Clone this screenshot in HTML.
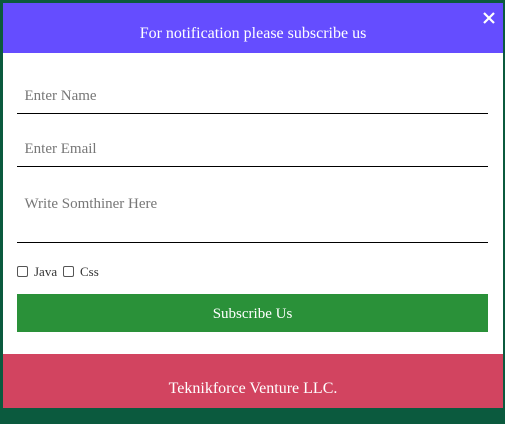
<!DOCTYPE html>
<html><head><style>
html,body{margin:0;padding:0;width:505px;height:411px;overflow:hidden;background:#0b5a3e;font-family:"Liberation Serif",serif;}
.box{position:absolute;left:3px;top:3px;width:500px;height:405px;background:#fff;}
.hd{position:absolute;left:0;top:0;width:500px;height:50px;background:#654dff;color:#fff;font-size:16px;text-align:center;line-height:62px;}
.x{position:absolute;right:8px;top:9px;}
.f{position:absolute;left:14px;width:471px;border-bottom:1px solid #000;color:#777;font-size:15px;}
.cb{position:absolute;top:261px;font-size:13px;color:#333;}
.cb span{display:inline-block;width:9px;height:9px;border:1px solid #555;border-radius:2px;vertical-align:-1px;margin-right:6px;}
.btn{position:absolute;left:14px;top:291px;width:471px;height:38px;background:#2a9139;color:#fff;text-align:center;line-height:40px;font-size:15px;}
.ft{position:absolute;left:0;top:351px;width:500px;height:54px;background:#d24460;color:#fff;text-align:center;font-size:16px;line-height:70px;}
</style></head><body>
<div class="box">
<div class="hd">For notification please subscribe us
<svg class="x" width="12" height="12" viewBox="0 0 12 12"><path d="M1 1L11 11M11 1L1 11" stroke="#fff" stroke-width="2.2"/></svg></div>
<div class="f" style="top:82px;height:28px;line-height:23px;">&nbsp;&nbsp;Enter Name</div>
<div class="f" style="top:135px;height:28px;line-height:23px;">&nbsp;&nbsp;Enter Email</div>
<div class="f" style="top:189px;height:50px;line-height:24px;">&nbsp;&nbsp;Write Somthiner Here</div>
<div class="cb" style="left:14px;"><span></span>Java</div>
<div class="cb" style="left:60px;"><span></span>Css</div>
<div class="btn">Subscribe Us</div>
<div class="ft">Teknikforce Venture LLC.</div>
</div>
</body></html>
